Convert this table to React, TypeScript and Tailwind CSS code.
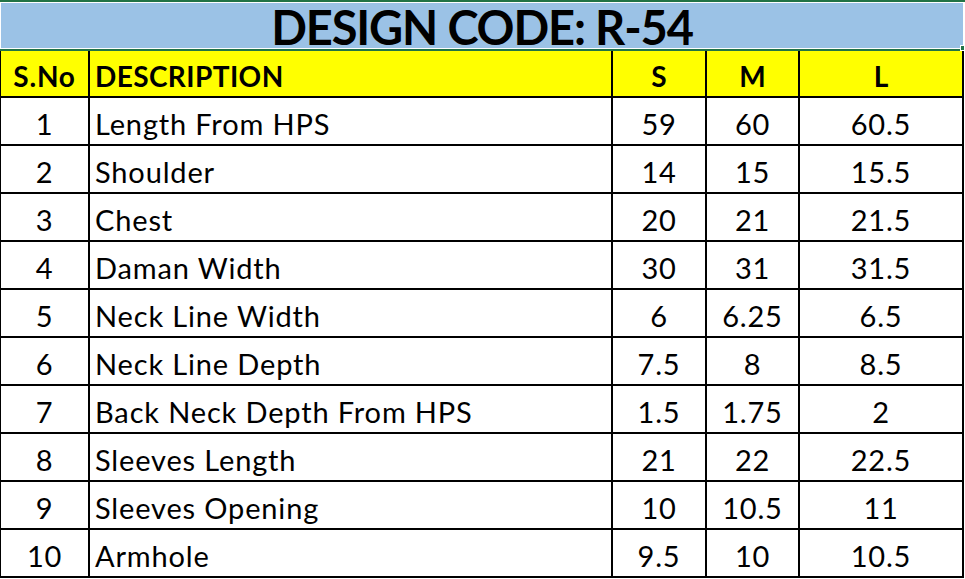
const rows = [
  ['1', 'Length From HPS', '59', '60', '60.5'],
  ['2', 'Shoulder', '14', '15', '15.5'],
  ['3', 'Chest', '20', '21', '21.5'],
  ['4', 'Daman Width', '30', '31', '31.5'],
  ['5', 'Neck Line Width', '6', '6.25', '6.5'],
  ['6', 'Neck Line Depth', '7.5', '8', '8.5'],
  ['7', 'Back Neck Depth From HPS', '1.5', '1.75', '2'],
  ['8', 'Sleeves Length', '21', '22', '22.5'],
  ['9', 'Sleeves Opening', '10', '10.5', '11'],
  ['10', 'Armhole', '9.5', '10', '10.5']
];

const font = { fontFamily: 'Lato, "Liberation Sans", sans-serif' };

export default function App() {
  return (
    <div className="w-[965px] h-[579px] bg-white text-black relative" style={font}>
      {/* title cell, selected */}
      <div className="h-[51px] border-t-2 border-b-2 border-[#217346] bg-white py-[1px] pl-[1px] pr-[2px]">
        <div className="h-full bg-[#9bc2e6] flex items-center justify-center">
          <span className="text-[47px] font-bold leading-none pt-[3px] tracking-[-1.15px]">DESIGN CODE: R-54</span>
        </div>
      </div>
      <div className="absolute left-[960px] top-[45px] w-[5px] h-[6px] bg-[#217346] border border-white"></div>

      <div className="w-[964px] bg-black pl-[1px] pr-[2px] pb-[2px] grid grid-cols-[87px_521px_92px_91px_162px] grid-rows-[45px_repeat(10,46px)] gap-[2px]">
        <div className="bg-[#ffff00] flex items-center justify-center text-[28px] font-bold pt-[4px] tracking-[0.8px]">S.No</div>
        <div className="bg-[#ffff00] flex items-center pl-[5px] text-[28px] font-bold pt-[4px] tracking-[0.4px]">DESCRIPTION</div>
        <div className="bg-[#ffff00] flex items-center justify-center text-[28px] font-bold pt-[4px]">S</div>
        <div className="bg-[#ffff00] flex items-center justify-center text-[28px] font-bold pt-[4px]">M</div>
        <div className="bg-[#ffff00] flex items-center justify-center text-[28px] font-bold pt-[4px]">L</div>
        {rows.map((r) => (
          <>
            <div key={r[0] + 'a'} className="bg-white flex items-center justify-center text-[29px] pt-[6px] tracking-[0.8px]">{r[0]}</div>
            <div key={r[0] + 'b'} className="bg-white flex items-center pl-[5px] text-[29px] pt-[6px] tracking-[0.85px]">{r[1]}</div>
            <div key={r[0] + 'c'} className="bg-white flex items-center justify-center text-[29px] pt-[6px] tracking-[0.8px]">{r[2]}</div>
            <div key={r[0] + 'd'} className="bg-white flex items-center justify-center text-[29px] pt-[6px] tracking-[0.8px]">{r[3]}</div>
            <div key={r[0] + 'e'} className="bg-white flex items-center justify-center text-[29px] pt-[6px] tracking-[0.8px]">{r[4]}</div>
          </>
        ))}
      </div>
    </div>
  );
}
